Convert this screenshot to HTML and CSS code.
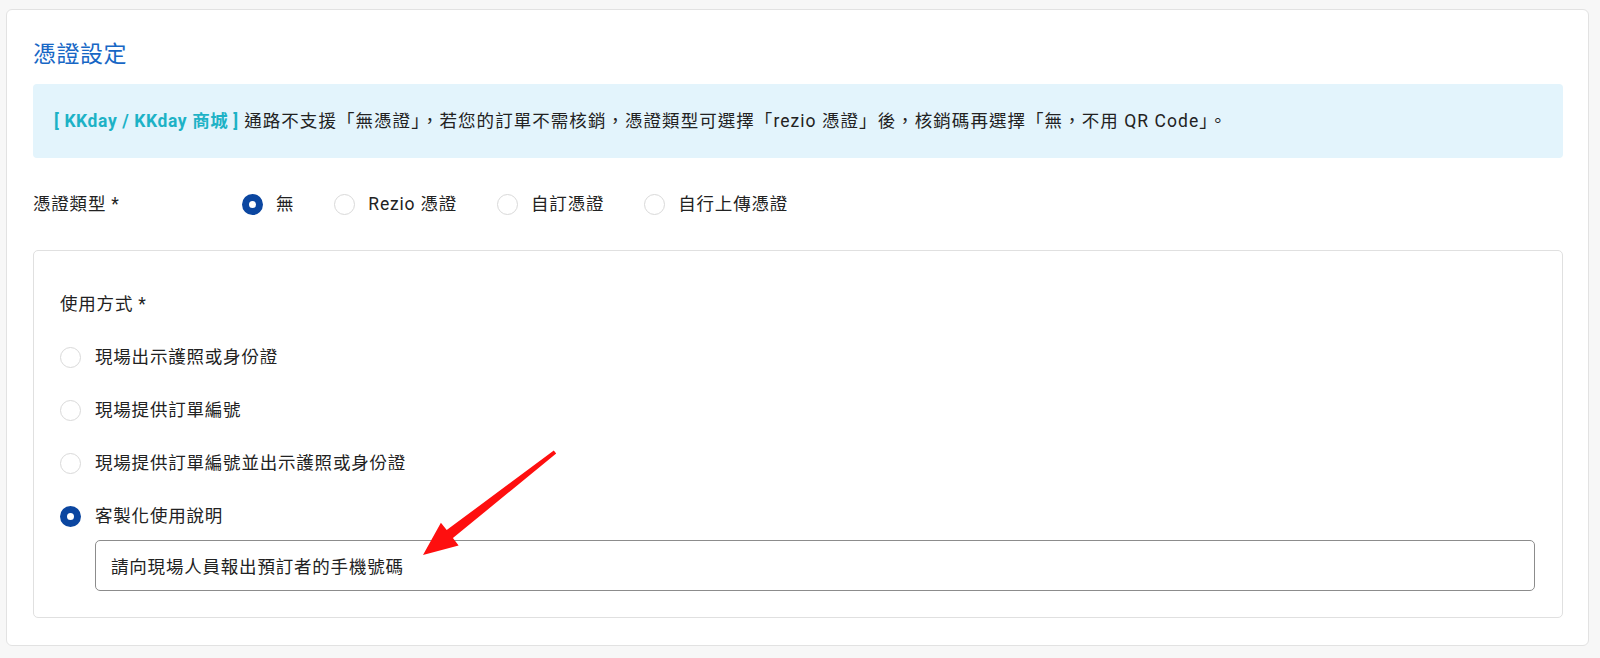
FILE: index.html
```html
<!DOCTYPE html>
<html lang="zh-Hant">
<head>
    <meta charset="UTF-8">
    <meta name="viewport" content="width=device-width, initial-scale=1.0">
    <title>憑證設定</title>
    <link rel="stylesheet" href="styles.css">
</head>
<body>
    <div class="page">
        <section class="card">
            <h2 class="card-title">憑證設定</h2>
            <div class="notice">
                <span class="notice-tag">[ KKday / KKday 商城 ]</span> 通路不支援「無憑證」，若您的訂單不需核銷，憑證類型可選擇「rezio 憑證」後，核銷碼再選擇「無，不用 QR Code」。
            </div>

            <div class="field-row">
                <div class="field-label">憑證類型 *</div>
                <div class="radio-group">
                    <span class="radio checked"><span class="radio-dot"></span>無</span>
                    <span class="radio"><span class="radio-dot"></span>Rezio 憑證</span>
                    <span class="radio"><span class="radio-dot"></span>自訂憑證</span>
                    <span class="radio"><span class="radio-dot"></span>自行上傳憑證</span>
                </div>
            </div>

            <div class="sub-panel">
                <div class="panel-label">使用方式 *</div>
                <div class="option-list">
                    <span class="radio"><span class="radio-dot"></span>現場出示護照或身份證</span>
                    <span class="radio"><span class="radio-dot"></span>現場提供訂單編號</span>
                    <span class="radio"><span class="radio-dot"></span>現場提供訂單編號並出示護照或身份證</span>
                    <span class="radio checked"><span class="radio-dot"></span>客製化使用說明</span>
                </div>
                <input class="text-input" type="text" value="請向現場人員報出預訂者的手機號碼">
            </div>
        </section>

        <!-- red annotation arrow -->
        <svg class="annotation" width="1600" height="658" viewBox="0 0 1600 658">
            <polygon fill="#fe0f0f" points="553.8,450.4 446.7,530.1 440.9,522.7 423,555 458.6,545.5 452.9,538.0 556.2,453.6"/>
        </svg>
    </div>
</body>
</html>
```

FILE: styles.css
```css
body {
    margin: 0;
    background-color: #f7f7f7;
    font-family: Roboto, "Noto Sans CJK TC", sans-serif;
    font-size: 17.5px;
    letter-spacing: 0.8px;
    color: #222;
}
.page {
    position: relative;
    width: 1600px;
    height: 658px;
    padding: 9px 11px 0 6px;
    box-sizing: border-box;
}
.card {
    background-color: #fff;
    border: 1px solid #e2e2e2;
    border-radius: 6px;
    padding: 29px 25px 27px 26px;
}
.card-title {
    margin: 0 0 13px;
    font-size: 23px;
    font-weight: 400;
    line-height: 32px;
    letter-spacing: 0.5px;
    color: #1767c5;
}
.notice {
    background-color: #e3f4fc;
    border-radius: 4px;
    padding: 25px 21px;
    line-height: 24px;
    letter-spacing: 1.05px;
}
.notice-tag {
    color: #1db2c6;
    font-weight: 700;
    letter-spacing: 0.6px;
}
.field-row {
    display: flex;
    align-items: center;
    margin-top: 34px;
    height: 24px;
    line-height: 24px;
}
.field-label {
    width: 209px;
    flex-shrink: 0;
}
.radio-group {
    display: flex;
    align-items: center;
}
.radio {
    display: inline-flex;
    align-items: center;
    gap: 13px;
    margin-right: 40px;
    line-height: 24px;
}
.radio-dot {
    width: 21px;
    height: 21px;
    border-radius: 50%;
    border: 1px solid #d9d9d9;
    box-sizing: border-box;
    background-color: #fff;
}
.radio.checked .radio-dot {
    border: 7.5px solid #0b46a0;
}
.sub-panel {
    margin-top: 34px;
    border: 1px solid #e0e0e0;
    border-radius: 5px;
    padding: 41px 27px 26px 26px;
}
.panel-label {
    line-height: 24px;
}
.option-list {
    display: flex;
    flex-direction: column;
    align-items: flex-start;
    gap: 29px;
    margin-top: 29px;
}
.option-list .radio {
    gap: 14px;
}
.text-input {
    display: block;
    margin: 12px 0 0 35px;
    width: calc(100% - 35px);
    height: 51px;
    box-sizing: border-box;
    border: 1px solid #8c8c8c;
    border-radius: 5px;
    padding: 0 15px;
    font: inherit;
    letter-spacing: inherit;
    color: #222;
    background-color: #fff;
}
/* annotation lies over the form */
.annotation {
    position: absolute;
    top: 0;
    left: 0;
    pointer-events: none;
}
```
